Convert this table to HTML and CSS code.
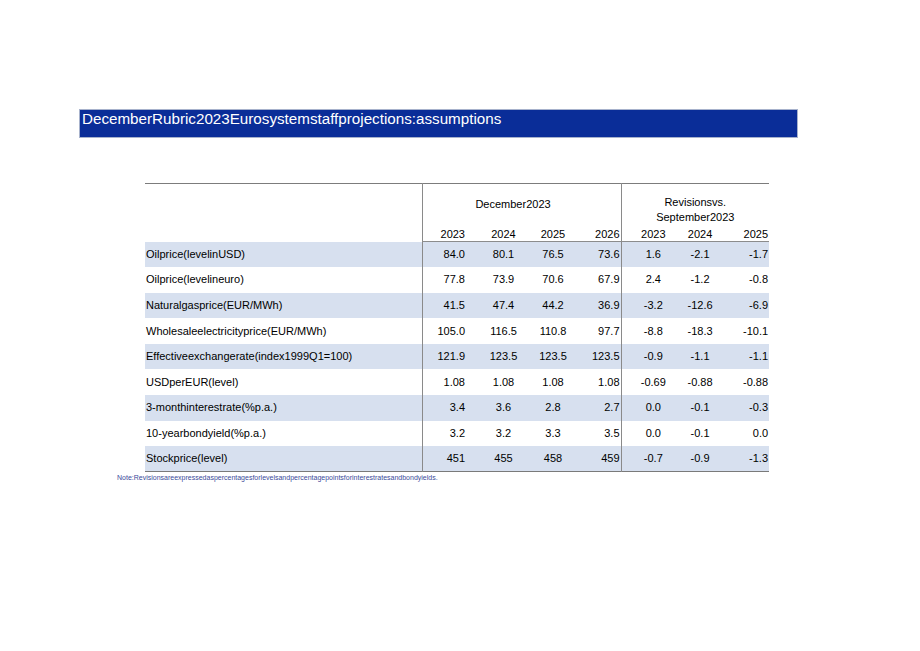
FILE: index.html
```html
<!DOCTYPE html>
<html lang="en">
<head>
<meta charset="utf-8">
<title>December Rubric 2023 Eurosystem staff projections: assumptions</title>
<link rel="stylesheet" href="styles.css">
</head>
<body>
<div class="page">
  <div class="title-bar">DecemberRubric2023Eurosystemstaffprojections:assumptions</div>
  <table class="proj">
    <colgroup>
      <col class="c-label">
      <col class="c-d1"><col class="c-d2"><col class="c-d3"><col class="c-d4">
      <col class="c-r1"><col class="c-r2"><col class="c-r3">
    </colgroup>
    <thead>
      <tr class="h1">
        <th class="lbl" rowspan="2"></th>
        <th class="grp dec sep" colspan="4">December2023</th>
        <th class="grp rev sep" colspan="3">Revisionsvs.<br>September2023</th>
      </tr>
      <tr class="h2">
        <th class="d1 sep">2023</th><th class="d2">2024</th><th class="d3">2025</th><th class="d4">2026</th>
        <th class="r1 sep">2023</th><th class="r2">2024</th><th class="r3">2025</th>
      </tr>
    </thead>
    <tbody>
      <tr class="shade"><td class="lbl">Oilprice(levelinUSD)</td><td class="d1 sep">84.0</td><td class="d2">80.1</td><td class="d3">76.5</td><td class="d4">73.6</td><td class="r1 sep">1.6</td><td class="r2">-2.1</td><td class="r3">-1.7</td></tr>
      <tr><td class="lbl">Oilprice(levelineuro)</td><td class="d1 sep">77.8</td><td class="d2">73.9</td><td class="d3">70.6</td><td class="d4">67.9</td><td class="r1 sep">2.4</td><td class="r2">-1.2</td><td class="r3">-0.8</td></tr>
      <tr class="shade"><td class="lbl">Naturalgasprice(EUR/MWh)</td><td class="d1 sep">41.5</td><td class="d2">47.4</td><td class="d3">44.2</td><td class="d4">36.9</td><td class="r1 sep">-3.2</td><td class="r2">-12.6</td><td class="r3">-6.9</td></tr>
      <tr><td class="lbl">Wholesaleelectricityprice(EUR/MWh)</td><td class="d1 sep">105.0</td><td class="d2">116.5</td><td class="d3">110.8</td><td class="d4">97.7</td><td class="r1 sep">-8.8</td><td class="r2">-18.3</td><td class="r3">-10.1</td></tr>
      <tr class="shade"><td class="lbl">Effectiveexchangerate(index1999Q1=100)</td><td class="d1 sep">121.9</td><td class="d2">123.5</td><td class="d3">123.5</td><td class="d4">123.5</td><td class="r1 sep">-0.9</td><td class="r2">-1.1</td><td class="r3">-1.1</td></tr>
      <tr><td class="lbl">USDperEUR(level)</td><td class="d1 sep">1.08</td><td class="d2">1.08</td><td class="d3">1.08</td><td class="d4">1.08</td><td class="r1 sep">-0.69</td><td class="r2">-0.88</td><td class="r3">-0.88</td></tr>
      <tr class="shade"><td class="lbl">3-monthinterestrate(%p.a.)</td><td class="d1 sep">3.4</td><td class="d2">3.6</td><td class="d3">2.8</td><td class="d4">2.7</td><td class="r1 sep">0.0</td><td class="r2">-0.1</td><td class="r3">-0.3</td></tr>
      <tr><td class="lbl">10-yearbondyield(%p.a.)</td><td class="d1 sep">3.2</td><td class="d2">3.2</td><td class="d3">3.3</td><td class="d4">3.5</td><td class="r1 sep">0.0</td><td class="r2">-0.1</td><td class="r3">0.0</td></tr>
      <tr class="shade last"><td class="lbl">Stockprice(level)</td><td class="d1 sep">451</td><td class="d2">455</td><td class="d3">458</td><td class="d4">459</td><td class="r1 sep">-0.7</td><td class="r2">-0.9</td><td class="r3">-1.3</td></tr>
    </tbody>
  </table>
  <p class="note">Note:Revisionsareexpressedaspercentagesforlevelsandpercentagepointsforinterestratesandbondyields.</p>
</div>
</body>
</html>
```

FILE: styles.css
```css
html, body {
  margin: 0;
  padding: 0;
  background: #ffffff;
}

body {
  font-family: "Liberation Sans", Arial, sans-serif;
  color: #000000;
}

.page {
  padding-top: 109px;
}

.title-bar {
  box-sizing: border-box;
  margin-left: 79px;
  width: 719px;
  height: 29px;
  background: #0a2d98;
  border: 1px solid #a7b2cc;
  color: #ffffff;
  font-size: 15.2px;
  line-height: 17px;
  padding: 0 0 0 2px;
  white-space: nowrap;
}

.proj {
  margin: 45px 0 0 145px;
  width: 624px;
  table-layout: fixed;
  border-collapse: collapse;
  font-size: 11px;
  border-top: 1px solid #7c7c7c;
  border-bottom: 1px solid #7a7a7a;
}

.c-label { width: 277px; }
.c-d1 { width: 50px; }
.c-d2 { width: 63px; }
.c-d3 { width: 36px; }
.c-d4 { width: 50px; }
.c-r1 { width: 64px; }
.c-r2 { width: 30px; }
.c-r3 { width: 54px; }

.proj th,
.proj td {
  padding: 0;
  font-weight: normal;
  white-space: nowrap;
}

.proj .sep {
  border-left: 1px solid #8a8a8a;
}

.h1 th {
  vertical-align: top;
}

.h1 .dec {
  padding: 14px 17px 17px 0;
  line-height: 13px;
  text-align: center;
}

.h1 .rev {
  padding: 11px 0 3px 0;
  line-height: 15px;
  text-align: center;
}

.h2 th {
  line-height: 12px;
  vertical-align: bottom;
  padding-bottom: 1px;
  border-bottom: 1px solid #8c8c8c;
}

tbody tr {
  height: 25.6px;
}

tbody td {
  vertical-align: middle;
  line-height: 13px;
}

tbody tr.shade td {
  background: #d7e0ef;
}

.lbl {
  text-align: left;
  padding-left: 1px !important;
}

.d1 { text-align: right; padding-right: 7px !important; }
.d2 { text-align: center; }
.d3 { text-align: center; }
.d4 { text-align: right; padding-right: 1px !important; }
.r1 { text-align: center; }
.r2 { text-align: center; }
.r3 { text-align: right; padding-right: 1px !important; }

.note {
  margin: 1px 0 0 117px;
  font-size: 7px;
  line-height: 9px;
  color: #3a4a9a;
  white-space: nowrap;
}
```
